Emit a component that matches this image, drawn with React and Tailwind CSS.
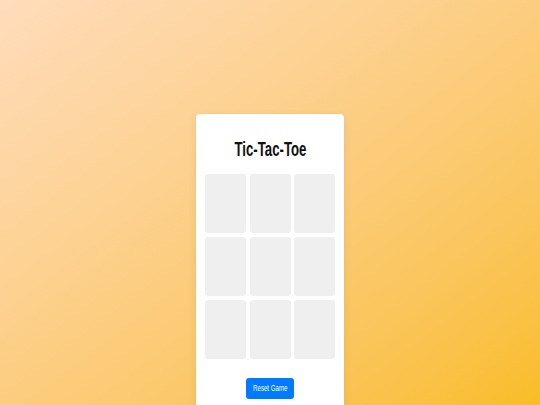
import { useState } from 'react';

// Tablero 3x3 vacío
const EMPTY = Array(9).fill(null);

export default function App() {
  const [board, setBoard] = useState(EMPTY);

  return (
    <div className="h-screen w-full bg-gradient-to-br from-[#ffdcbb] to-[#f9bd24] flex justify-center pt-[114px] font-['Liberation_Sans',Arial,sans-serif] overflow-hidden">
      <div className="w-[148px] h-[320px] shrink-0 bg-white rounded-[4px] shadow-[0_2px_8px_rgba(0,0,0,0.08)] px-[9px] pt-[24px] flex flex-col items-center">
        <h1 className="text-[20px] leading-[23px] font-bold text-[#111] mb-[13px] whitespace-nowrap">
          <span className="inline-block scale-x-[0.66]">Tic-Tac-Toe</span>
        </h1>

        <div className="grid grid-cols-3 gap-x-[3.5px] gap-y-[4px] w-full">
          {board.map((cell, i) => (
            <button
              key={i}
              onClick={() => {
                const next = [...board];
                next[i] = 'X';
                setBoard(next);
              }}
              className="h-[59px] bg-[#efefef] rounded-[3px] text-2xl font-bold"
            >
              {cell}
            </button>
          ))}
        </div>

        <button
          onClick={() => setBoard(EMPTY)}
          className="mt-[19px] w-[48px] h-[21px] shrink-0 bg-[#007bff] text-white rounded-[3px] text-[9px] leading-none whitespace-nowrap flex items-center justify-center"
        >
          <span className="inline-block scale-x-[0.68]">Reset Game</span>
        </button>
      </div>
    </div>
  );
}
